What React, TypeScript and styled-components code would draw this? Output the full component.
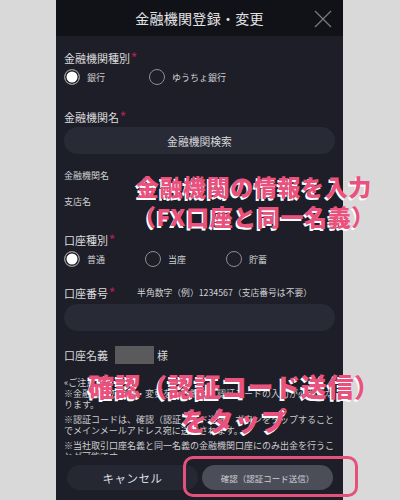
import styled, { createGlobalStyle } from "styled-components";

const GlobalStyle = createGlobalStyle`
  html, body {
    margin: 0;
    padding: 0;
    background: #d9d9d9;
  }
  body {
    font-family: "Noto Sans CJK JP", "Noto Sans", sans-serif;
  }
`;

const Page = styled.div`
  width: 400px;
  height: 500px;
  display: flex;
  justify-content: center;
  background: #d9d9d9;
  position: relative;
  overflow: hidden;
`;

const Panel = styled.div`
  width: 287px;
  height: 500px;
  margin-left: -1px;
  display: flex;
  flex-direction: column;
  background: #1d1e27;
  color: #d6d6d8;
`;

const Header = styled.div`
  height: 36px;
  flex-shrink: 0;
  background: #111218;
  display: flex;
  align-items: center;
  justify-content: center;
  position: relative;
  font-size: 14px;
  letter-spacing: 0.3px;
  color: #e2e2e4;
`;

const Close = styled.button`
  position: absolute;
  right: 11px;
  top: 10px;
  width: 18px;
  height: 18px;
  padding: 0;
  border: none;
  background: none;
  display: flex;
`;

const Body = styled.div`
  flex: 1;
  overflow: hidden;
  padding: 14px 8px 0;
`;

const Field = styled.div<{ $mt?: number }>`
  margin-top: ${(p) => p.$mt ?? 0}px;
`;

const Label = styled.div`
  font-size: 11px;
  line-height: 16px;
  color: #dcdcde;
  display: flex;
  align-items: center;
`;

const Req = styled.span`
  color: #a0224f;
  font-size: 12px;
  font-weight: 700;
  margin-left: 1px;
  align-self: flex-start;
  line-height: 14px;
`;

const Hint = styled.span`
  font-size: 8.8px;
  margin-left: 22px;
  color: #d0d0d2;
`;

const RadioRow = styled.div`
  display: flex;
  height: 16px;
  align-items: center;
`;

const RadioItem = styled.label<{ $w: number }>`
  width: ${(p) => p.$w}px;
  display: flex;
  align-items: center;
  gap: 7px;
  font-size: 9px;
  color: #d0d0d2;
`;

const Circle = styled.span<{ $on?: boolean }>`
  width: 16px;
  height: 16px;
  box-sizing: border-box;
  border-radius: 50%;
  border: 1.3px solid #8d8d92;
  background: ${(p) => (p.$on ? "#ffffff" : "transparent")};
  box-shadow: ${(p) => (p.$on ? "inset 0 0 0 1.5px #1d1e27" : "none")};
  flex-shrink: 0;
`;

const Pill = styled.div<{ $h?: number }>`
  height: ${(p) => p.$h ?? 27}px;
  border-radius: 14px;
  background: #282a35;
  display: flex;
  align-items: center;
  justify-content: center;
  font-size: 10.8px;
  color: #d8d8da;
`;

const Small = styled.div`
  font-size: 9px;
  line-height: 14px;
  color: #cfcfd1;
`;

const NameRow = styled.div`
  display: flex;
  align-items: center;
  height: 18px;
  font-size: 11px;
`;

const Masked = styled.span`
  width: 39px;
  height: 18px;
  background: #5a5a5c;
  margin: 0 3px 0 7px;
`;

const Notice = styled.div`
  font-size: 9px;
  line-height: 11px;
  color: #cdcdcf;
  p {
    margin: 0 0 4px;
  }
`;

const Footer = styled.div`
  height: 45px;
  flex-shrink: 0;
  display: flex;
  gap: 4px;
  padding: 10px 10px 0 11px;
  box-sizing: border-box;
  background: #1d1e27;
`;

const FootButton = styled.button<{ $primary?: boolean }>`
  flex: 1;
  height: 25px;
  border: none;
  border-radius: 12.5px;
  font-family: inherit;
  padding: 0;
  background: ${(p) => (p.$primary ? "#4b4d58" : "#252733")};
  color: ${(p) => (p.$primary ? "#cfcfd3" : "#dedee0")};
  font-size: ${(p) => (p.$primary ? "8.5px" : "11.5px")};
  letter-spacing: ${(p) => (p.$primary ? "0" : "0.5px")};
`;

const Callout = styled.div<{ $top: number; $left: number; $size: number; $lh: number }>`
  position: absolute;
  top: ${(p) => p.$top}px;
  left: ${(p) => p.$left}px;
  font-size: ${(p) => p.$size}px;
  line-height: ${(p) => p.$lh}px;
  font-weight: 900;
  color: #e9527e;
  text-shadow: -1.5px 1.5px 0 #ffffff;
  text-align: center;
  white-space: nowrap;
  letter-spacing: 0.6px;
`;

const Frame = styled.div`
  position: absolute;
  left: 183px;
  top: 456px;
  width: 175px;
  height: 41px;
  box-sizing: border-box;
  border: 3px solid #e4527c;
  border-radius: 10px;
`;

function Radio({ label, on, w }: { label: string; on?: boolean; w: number }) {
  return (
    <RadioItem $w={w}>
      <Circle $on={on} />
      {label}
    </RadioItem>
  );
}

export default function App() {
  return (
    <>
      <GlobalStyle />
      <Page>
        <Panel>
          <Header>
            金融機関登録・変更
            <Close aria-label="閉じる">
              <svg width="18" height="18" viewBox="0 0 18 18">
                <path d="M1 1 L17 17 M17 1 L1 17" stroke="#7a7a80" strokeWidth="1.2" />
              </svg>
            </Close>
          </Header>
          <Body>
            <Field>
              <Label>
                金融機関種別<Req>*</Req>
              </Label>
            </Field>
            <Field $mt={3}>
              <RadioRow>
                <Radio label="銀行" on w={85} />
                <Radio label="ゆうちょ銀行" w={120} />
              </RadioRow>
            </Field>
            <Field $mt={24}>
              <Label>
                金融機関名<Req>*</Req>
              </Label>
            </Field>
            <Field $mt={2}>
              <Pill>金融機関検索</Pill>
            </Field>
            <Field $mt={15}>
              <Small>金融機関名</Small>
            </Field>
            <Field $mt={12}>
              <Small>支店名</Small>
            </Field>
            <Field $mt={23}>
              <Label>
                口座種別<Req>*</Req>
              </Label>
            </Field>
            <Field $mt={3}>
              <RadioRow>
                <Radio label="普通" on w={81} />
                <Radio label="当座" w={81} />
                <Radio label="貯蓄" w={81} />
              </RadioRow>
            </Field>
            <Field $mt={18}>
              <Label>
                口座番号<Req>*</Req>
                <Hint>半角数字（例）1234567（支店番号は不要）</Hint>
              </Label>
            </Field>
            <Field $mt={3}>
              <Pill />
            </Field>
            <Field $mt={15}>
              <NameRow>
                口座名義
                <Masked />様
              </NameRow>
            </Field>
            <Field $mt={13}>
              <Notice>
                <p>
                  «ご注意»
                  <br />
                  ※金融機関の登録・変更を行う際は、認証コードの入力が必要になります。
                </p>
                <p>※認証コードは、確認（認証コード送信）ボタンをタップすることでメインメールアドレス宛に送信されます。</p>
                <p>※当社取引口座名義と同一名義の金融機関口座にのみ出金を行うことが可能です。</p>
              </Notice>
            </Field>
          </Body>
          <Footer>
            <FootButton>キャンセル</FootButton>
            <FootButton $primary>確認（認証コード送信）</FootButton>
          </Footer>
        </Panel>
        <Callout $top={171} $left={133} $size={23} $lh={30}>
          金融機関の情報を入力
          <br />
          （FX口座と同一名義）
        </Callout>
        <Callout $top={369} $left={88} $size={26} $lh={34}>
          確認（認証コード送信）
          <br />
          をタップ
        </Callout>
        <Frame />
      </Page>
    </>
  );
}
